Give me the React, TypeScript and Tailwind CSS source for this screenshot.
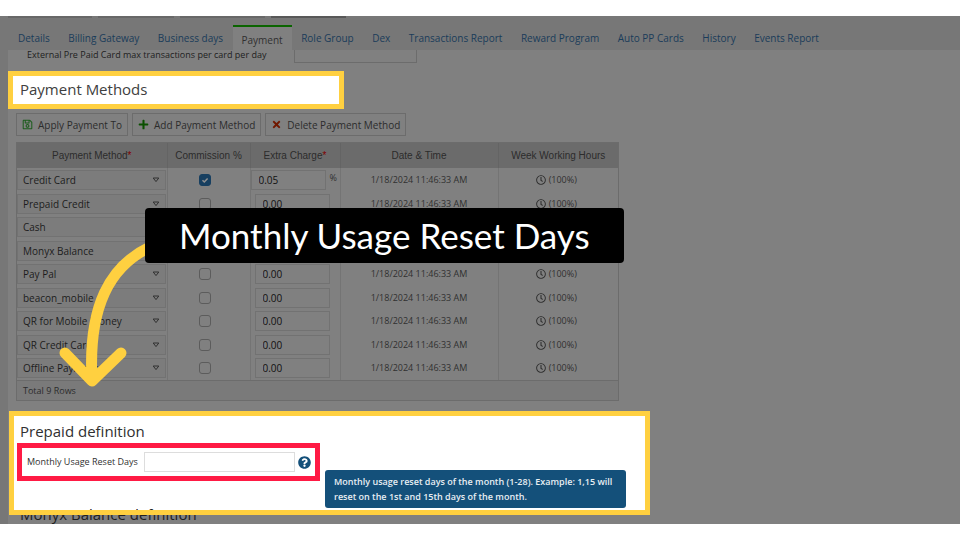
import { FaQuestionCircle, FaPlus, FaTimes, FaRegClock, FaRegSave } from "react-icons/fa";

const tabs = [
  "Details",
  "Billing Gateway",
  "Business days",
  "Payment",
  "Role Group",
  "Dex",
  "Transactions Report",
  "Reward Program",
  "Auto PP Cards",
  "History",
  "Events Report",
];

const stamp = "1/18/2024 11:46:33 AM";

const rows = [
  { name: "Credit Card", charge: "0.05", commission: true, date: stamp, hours: "(100%)" },
  { name: "Prepaid Credit", charge: "0.00", commission: false, date: stamp, hours: "(100%)" },
  { name: "Cash", charge: "", commission: false, date: "", hours: "" },
  { name: "Monyx Balance", charge: "", commission: false, date: "", hours: "" },
  { name: "Pay Pal", charge: "0.00", commission: false, date: stamp, hours: "(100%)" },
  { name: "beacon_mobile", charge: "0.00", commission: false, date: stamp, hours: "(100%)" },
  { name: "QR for Mobile Money", charge: "0.00", commission: false, date: stamp, hours: "(100%)" },
  { name: "QR Credit Card", charge: "0.00", commission: false, date: stamp, hours: "(100%)" },
  { name: "Offline Payment", charge: "0.00", commission: false, date: stamp, hours: "(100%)" },
];

function Tabs() {
  return (
    <nav className="flex h-[34px] items-end bg-[#777777] pl-[9px]">
      <div className="flex w-[819px] items-end justify-between">
        {tabs.map((tab) =>
          tab === "Payment" ? (
            <a
              key={tab}
              href="#payment"
              aria-current="page"
              className="flex h-[25px] items-center border-t-2 border-[#0a6400] bg-[#808080] px-[9px] pt-[3px] text-[10px] leading-4 whitespace-nowrap text-[#303030]"
            >
              {tab}
            </a>
          ) : (
            <a
              key={tab}
              href="#tab"
              className="flex h-[25px] items-center px-[9px] text-[10px] leading-4 whitespace-nowrap text-[#1a3c5a]"
            >
              {tab}
            </a>
          ),
        )}
      </div>
    </nav>
  );
}

function Toolbar() {
  const button =
    "flex h-[23px] items-center gap-[5px] border border-[#6c6c6c] px-[5px] text-[10px] leading-4 whitespace-nowrap text-[#2c2c2c]";
  return (
    <div className="mt-1 flex gap-1 pl-2">
      <button className={button}>
        <FaRegSave className="size-[11px] text-[#1d5c1d]" />
        Apply Payment To
      </button>
      <button className={button}>
        <FaPlus className="size-[11px] text-[#0a5000]" />
        Add Payment Method
      </button>
      <button className={button}>
        <FaTimes className="size-[11px] text-[#701800]" />
        Delete Payment Method
      </button>
    </div>
  );
}

function MethodsTable() {
  const head = "border-l border-[#646464] p-0 font-normal first:border-l-0";
  return (
    <div className="mt-[6px] ml-2 w-[603px] border border-[#6c6c6c]">
      <table className="w-full table-fixed border-collapse text-[10px] leading-4">
        <colgroup>
          <col className="w-[150px]" />
          <col className="w-[83px]" />
          <col className="w-[90px]" />
          <col className="w-[158px]" />
          <col />
        </colgroup>
        <thead>
          <tr className="h-[25px] bg-[#6b6b6b] font-['Liberation_Sans',sans-serif] text-[10px] text-[#2c2c2c]">
            <th className={head}>
              Payment Method<span className="text-[#800000]">*</span>
            </th>
            <th className={head}>Commission %</th>
            <th className={head}>
              Extra Charge<span className="text-[#800000]">*</span>
            </th>
            <th className={head}>Date &amp; Time</th>
            <th className={head}>Week Working Hours</th>
          </tr>
        </thead>
        <tbody>
          {rows.map((row, i) => (
            <tr key={row.name} className="odd:h-[24px] even:h-[23px]">
              <td className="p-0">
                <div className="relative mr-px h-5 border border-[#727272] bg-[#7c7c7c]">
                  <select
                    aria-label="Payment method"
                    className="block h-full w-full appearance-none pl-[5px] text-[10px] leading-4 text-[#1c1c1c]"
                  >
                    <option>{row.name}</option>
                  </select>
                  <svg viewBox="0 0 8 6" className="pointer-events-none absolute top-[6px] right-[5px] h-[6px] w-2">
                    <path d="M1.2 1H6.8L4 4.6Z" fill="none" stroke="#303030" strokeWidth="1" />
                  </svg>
                </div>
              </td>
              <td className="border-l border-[#747474] p-0">
                <div className="flex justify-center pr-2">
                  <input
                    type="checkbox"
                    aria-label={row.name + " commission"}
                    defaultChecked={row.commission}
                    className="peer size-3 appearance-none rounded-[3px] border border-[#5c5c5c] checked:border-[#173f60] checked:bg-[#173f60]"
                  />
                  <svg
                    viewBox="0 0 12 12"
                    className="pointer-events-none -ml-3 size-3 opacity-0 peer-checked:opacity-100"
                  >
                    <path d="M3.5 6.2L5.3 8L8.6 4.4" fill="none" stroke="#909090" strokeWidth="1.5" />
                  </svg>
                </div>
              </td>
              <td className="border-l border-[#747474] p-0">
                <div className={i === 0 ? "flex" : "flex pl-1"}>
                  <input
                    aria-label={row.name + " extra charge"}
                    defaultValue={row.charge}
                    className="h-5 w-[75px] border border-[#727272] pl-[7px] text-[10px] leading-4 text-[#101010]"
                  />
                  {i === 0 && <span className="pl-1 text-[9px] text-[#303030]">%</span>}
                </div>
              </td>
              <td className="border-l border-[#747474] p-0 text-center text-[9px] text-[#303030]">{row.date}</td>
              <td className="border-l border-[#747474] p-0 text-[9px] text-[#303030]">
                {row.hours && (
                  <span className="flex items-center justify-center gap-[3px] pr-1">
                    <FaRegClock className="size-[10px]" />
                    {row.hours}
                  </span>
                )}
              </td>
            </tr>
          ))}
        </tbody>
      </table>
      <div className="h-[20px] border-t border-[#6c6c6c] bg-[#7a7a7a] pl-[6px] text-[9px] leading-[20px] text-[#2c2c2c]">
        Total 9 Rows
      </div>
    </div>
  );
}

function PrepaidSection() {
  return (
    <section className="relative mt-[10px] ml-px h-[104px] w-[641px] bg-white px-[11px] pt-[9px] text-[#303030]">
      <h2 className="mb-px text-[15px] leading-[22px]">Prepaid definition</h2>
      <div className="-ml-[3px] flex h-[38px] w-[303px] items-center border-5 border-[#ff1a44] pl-[5px]">
        <label htmlFor="reset-days" className="w-[117px] text-[9px] leading-4 whitespace-nowrap">
          Monthly Usage Reset Days
        </label>
        <input id="reset-days" className="h-5 w-[151px] border border-[#dddddd] px-1 text-[10px]" />
        <button aria-label="Help" className="ml-[3px]">
          <FaQuestionCircle className="size-[13px] text-[#14507a]" />
        </button>
      </div>
      <div
        role="tooltip"
        className="absolute top-[59px] left-[316px] w-[301px] rounded-[3px] bg-[#14507a] px-[9px] py-[4px] text-[9px] leading-[15px] font-semibold text-[#e8eef3]"
      >
        Monthly usage reset days of the month (1-28). Example: 1,15 will reset on the 1st and 15th days of the month.
      </div>
    </section>
  );
}

export default function App() {
  return (
    <div className="min-h-screen bg-white py-4 font-['Open_Sans','Noto_Sans',sans-serif]">
      <main className="relative h-[508px] overflow-hidden bg-[#808080]">
        <div className="absolute top-0 left-2 flex h-[2px] gap-[6px]">
          <span className="w-[84px] bg-[#686868]" />
          <span className="w-[76px] bg-[#686868]" />
          <span className="w-[85px] bg-[#686868]" />
          <span className="w-[75px] bg-[#585858]" />
        </div>
        <Tabs />
        <div className="border-l-8 border-[#777777]">
          <div className="flex h-[21px] items-start">
            <label htmlFor="max-transactions" className="w-[286px] pl-[19px] text-[9px] leading-[10px] text-[#202020]">
              External Pre Paid Card max transactions per card per day
            </label>
            <input
              id="max-transactions"
              className="h-[13px] w-[123px] border border-t-0 border-[#6c6c6c] px-1 text-[10px]"
            />
          </div>
          <h2 className="h-[38px] w-[336px] border-5 border-[#ffd040] bg-white pl-[7px] text-[15px] leading-[27px] text-[#404040]">
            Payment Methods
          </h2>
          <Toolbar />
          <MethodsTable />
          <PrepaidSection />
          <h2 className="relative -mt-[12px] pl-3 text-[15px] leading-[22px] text-[#202020]">
            Monyx Balance definition
          </h2>
        </div>
        <div className="pointer-events-none absolute top-[395px] left-[9px] h-[104px] w-[641px] border-5 border-[#ffd040]" />
        <svg viewBox="0 0 100 160" className="pointer-events-none absolute top-[214px] left-[54px] h-[160px] w-[100px]">
          <path
            d="M96 17C56 36 34 76 38 150M11 123L38 151L67 123"
            fill="none"
            stroke="#ffd040"
            strokeWidth="11"
            strokeLinecap="round"
            strokeLinejoin="round"
          />
        </svg>
        <p className="absolute top-[192px] left-[145px] rounded-[4px] bg-black px-[34px] font-['Lato',sans-serif] text-[35px] leading-[55px] whitespace-nowrap text-white">
          Monthly Usage Reset Days
        </p>
      </main>
    </div>
  );
}
